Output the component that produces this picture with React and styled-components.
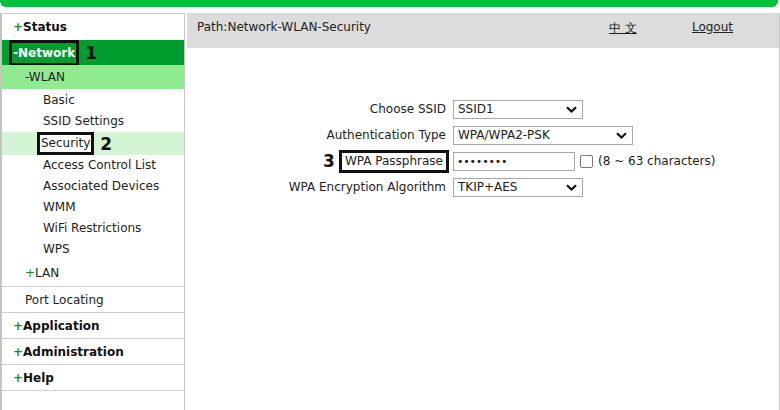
import styled, { createGlobalStyle } from "styled-components"

const GlobalStyle = createGlobalStyle`
    body {
        margin: 0;
        font-family: "DejaVu Sans", Verdana, sans-serif;
        font-size: 12px;
        color: #222;
        background: #fff;
    }
`

const menuTop = [
    { label: "Basic", h: 21 },
    { label: "SSID Settings", h: 22 },
    { label: "Security", h: 23, active: true, mark: "2" },
    { label: "Access Control List", h: 20 },
    { label: "Associated Devices", h: 21 },
    { label: "WMM", h: 21 },
    { label: "WiFi Restrictions", h: 21 },
    { label: "WPS", h: 21 },
]

function Chevron() {
    return (
        <svg width="11" height="7" viewBox="0 0 11 7">
            <path d="M1 1.2 L5.5 5.5 L10 1.2" fill="none" stroke="#111" strokeWidth="2.2" />
        </svg>
    )
}

export default function App() {
    return (
        <>
            <GlobalStyle />
            <TopBar />
            <Page>
                <Sidebar>
                    <Group $h={26}><Plus>+</Plus>Status</Group>
                    <Group $open $h={25}>
                        <Mark>-Network</Mark>
                        <Num>1</Num>
                    </Group>
                    <SubHead>-WLAN</SubHead>
                    <Leaves>
                        {menuTop.map(item => (
                            <Leaf key={item.label} $h={item.h} $active={item.active}>
                                {item.mark ? <Mark $thin>{item.label}</Mark> : item.label}
                                {item.mark && <Num>{item.mark}</Num>}
                            </Leaf>
                        ))}
                    </Leaves>
                    <Row $h={27}><Plus $thin>+</Plus>LAN</Row>
                    <Row $h={25}>Port Locating</Row>
                    <Group $line $h={25}><Plus>+</Plus>Application</Group>
                    <Group $line $h={25}><Plus>+</Plus>Administration</Group>
                    <Group $line $h={25}><Plus>+</Plus>Help</Group>
                </Sidebar>

                <Content>
                    <Header>
                        <span>Path:Network-WLAN-Security</span>
                        <Links>
                            <a>中 文</a>
                            <a>Logout</a>
                        </Links>
                    </Header>

                    <Form>
                        <Label>Choose SSID</Label>
                        <div><Select $w={130}>SSID1<Chevron /></Select></div>

                        <Label>Authentication Type</Label>
                        <div><Select $w={180}>WPA/WPA2-PSK<Chevron /></Select></div>

                        <Label $bare>
                            <Num $big>3</Num>
                            <Mark $thin $pad>WPA Passphrase</Mark>
                        </Label>
                        <Inline>
                            <Input>••••••••</Input>
                            <Check />
                            <span>(8 ~ 63 characters)</span>
                        </Inline>

                        <Label>WPA Encryption Algorithm</Label>
                        <div><Select $w={130}>TKIP+AES<Chevron /></Select></div>
                    </Form>
                </Content>
            </Page>
        </>
    )
}

const TopBar = styled.div`
    height: 7px;
    width: 778px;
    background: #00c03c;
    border-radius: 0 0 6px 6px;
`

const Page = styled.div`
    display: flex;
    margin-top: 6px;
    height: 397px;
`

const Sidebar = styled.nav`
    width: 182px;
    border-left: 2px solid #c4c4c4;
    border-right: 1px solid #c8c8c8;
    border-top: 1px solid #c8c8c8;
    display: flex;
    flex-direction: column;
`

const Group = styled.div`
    height: ${p => p.$h}px;
    flex-shrink: 0;
    display: flex;
    align-items: center;
    padding-left: ${p => p.$open ? "7px" : "11px"};
    font-weight: bold;
    color: ${p => p.$open ? "#fff" : "#111"};
    background: ${p => p.$open ? "#009e2f" : "transparent"};
    ${p => p.$line && "border-bottom: 1px solid #cfcfcf;"}
`

const Plus = styled.span`
    color: #1e8a1e;
    font-weight: ${p => p.$thin ? "normal" : "bold"};
`

const Mark = styled.span`
    border: 3px solid #111;
    padding: ${p => p.$pad ? "0 3px" : "0 1px"};
    line-height: ${p => p.$thin ? "17px" : "20px"};
    color: ${p => p.$thin ? "#222" : "#fff"};
    background: ${p => p.$thin ? "#fff" : "#009e2f"};
`

const Num = styled.span`
    font-weight: bold;
    font-size: 17px;
    color: #111;
    margin: ${p => p.$big ? "0 4px 0 0" : "0 0 0 6px"};
`

const SubHead = styled.div`
    height: 24px;
    flex-shrink: 0;
    display: flex;
    align-items: center;
    padding-left: 23px;
    background: #90eb90;
`

const Leaves = styled.div`
    display: flex;
    flex-direction: column;
`

const Leaf = styled.div`
    height: ${p => p.$h}px;
    display: flex;
    align-items: center;
    padding-left: ${p => p.$active ? "35px" : "41px"};
    background: ${p => p.$active ? "#d4f5d4" : "transparent"};
`

const Row = styled.div`
    height: ${p => p.$h}px;
    flex-shrink: 0;
    display: flex;
    align-items: center;
    padding-left: 23px;
    border-bottom: 1px solid #cfcfcf;
`

const Content = styled.main`
    flex: 1;
    margin-left: 2px;
    border-right: 1px solid #c8c8c8;
    width: 590px;
`

const Header = styled.header`
    height: 35px;
    background: #dcdcdc;
    display: flex;
    justify-content: space-between;
    align-items: flex-start;
    padding: 7px 46px 0 10px;
    box-sizing: border-box;
    color: #222;
`

const Links = styled.div`
    display: flex;
    gap: 55px;
    & a {
        color: #222;
        text-decoration: underline;
    }
`

const Form = styled.div`
    display: grid;
    grid-template-columns: 262px 1fr;
    grid-auto-rows: 26px;
    column-gap: 4px;
    margin-top: 48px;
    align-items: center;
`

const Label = styled.div`
    display: flex;
    justify-content: flex-end;
    align-items: center;
    padding-right: ${p => p.$bare ? "0" : "3px"};
    color: #222;
`

const Select = styled.div`
    width: ${p => p.$w}px;
    height: 19px;
    box-sizing: border-box;
    border: 1px solid #a8a8a8;
    background: #fff;
    display: flex;
    justify-content: space-between;
    align-items: center;
    padding: 0 5px 0 4px;
`

const Inline = styled.div`
    display: flex;
    align-items: center;
    gap: 5px;
`

const Input = styled.div`
    width: 122px;
    height: 19px;
    box-sizing: border-box;
    border: 1px solid #a8a8a8;
    padding-left: 3px;
    display: flex;
    align-items: center;
    font-size: 11px;
    letter-spacing: -0.2px;
`

const Check = styled.span`
    width: 13px;
    height: 13px;
    box-sizing: border-box;
    border: 1px solid #777;
    border-radius: 2px;
    background: #fff;
`
